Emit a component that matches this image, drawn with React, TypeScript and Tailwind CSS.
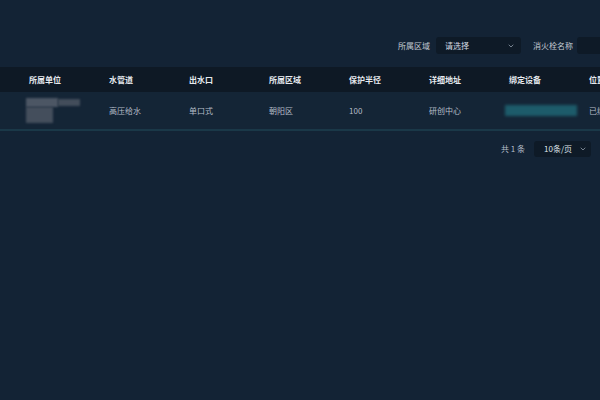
import React from 'react';

const columns = ['所属单位', '水管道', '出水口', '所属区域', '保护半径', '详细地址', '绑定设备', '位置'];

const Chevron = ({ className }: { className?: string }) => (
  <svg className={className} width="8" height="8" viewBox="0 0 24 24" fill="none" stroke="currentColor" strokeWidth={2.5}>
    <path strokeLinecap="round" strokeLinejoin="round" d="M6 9l6 6 6-6" />
  </svg>
);

export default function App() {
  return (
    <div
      className="w-[600px] h-[400px] bg-[#132335] overflow-hidden"
      style={{ fontFamily: '"Noto Sans CJK SC", "Liberation Sans", sans-serif' }}
    >
      {/* Filters */}
      <div className="flex items-center pt-[37px] pl-[398px] whitespace-nowrap text-[8px] text-[#c3cad3]">
        <span className="w-[32px]">所属区域</span>
        <div className="ml-[6px] w-[85px] h-[17px] shrink-0 rounded-[3px] bg-[#0e1a27] flex items-center justify-between pl-[9px] pr-[6px]">
          <span className="text-[#d5dbe2]">请选择</span>
          <Chevron className="text-[#8a96a3]" />
        </div>
        <span className="ml-[12px] w-[42px]">消火栓名称</span>
        <div className="ml-[4px] w-[80px] h-[17px] shrink-0 rounded-[3px] bg-[#0e1a27]" />
      </div>

      {/* Table */}
      <div className="mt-[13px]">
        <div className="h-[25px] bg-[#0e1925] grid grid-cols-[repeat(8,80px)] items-center pl-[29px] text-[8px] font-bold text-[#e6eaef] whitespace-nowrap">
          {columns.map((c) => (
            <div key={c}>{c}</div>
          ))}
        </div>
        <div className="h-[37px] bg-[#142536] grid grid-cols-[repeat(8,80px)] items-center text-[8px] text-[#b4bdc8] whitespace-nowrap">
          <div className="pl-[26px] flex flex-col">
            <div className="flex">
              <div className="w-[40px] h-[9px] bg-[#4c5664] blur-[1px]" />
              <div className="w-[28px] h-[7px] mt-[1px] bg-[#434d5b] blur-[1px]" />
            </div>
            <div className="w-[27px] h-[16px] bg-[#444e5c] blur-[1px]" />
          </div>
          <div className="pl-[29px]">高压给水</div>
          <div className="pl-[29px]">单口式</div>
          <div className="pl-[29px]">朝阳区</div>
          <div className="pl-[29px]">100</div>
          <div className="pl-[29px]">研创中心</div>
          <div className="pl-[25px]">
            <div className="w-[72px] h-[11px] bg-[#1d5b6a] blur-[1.5px]" />
          </div>
          <div className="pl-[29px]">已绑定</div>
        </div>
        <div className="h-[2px] bg-[#1a3848]" />
      </div>

      {/* Pagination */}
      <div className="flex items-center justify-end mt-[10px] pr-[9px] text-[8px] text-[#b4bdc8] whitespace-nowrap">
        <span>共 1 条</span>
        <div className="ml-[9px] w-[57px] h-[16px] rounded-[3px] bg-[#0e1a27] flex items-center justify-between pl-[10px] pr-[4px]">
          <span className="text-[#dfe4ea]">10条/页</span>
          <Chevron className="text-[#8a96a3]" />
        </div>
      </div>
    </div>
  );
}
